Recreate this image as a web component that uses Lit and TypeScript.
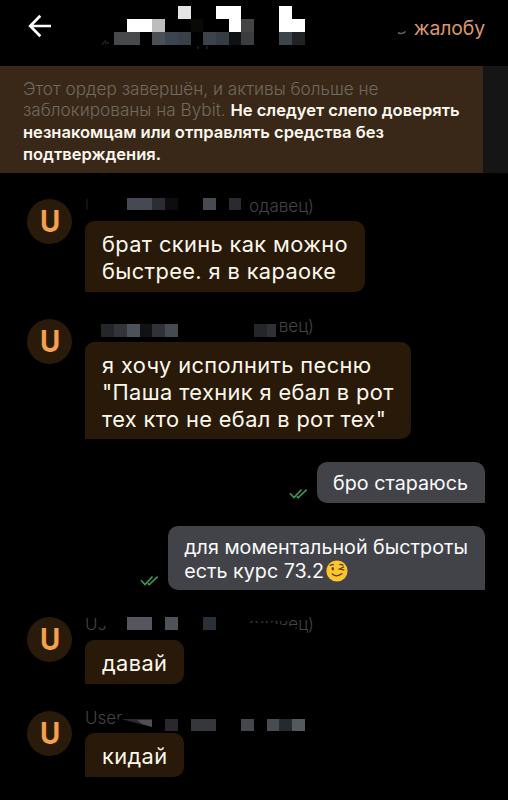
import { LitElement, html, css, svg } from "lit";
import { customElement, property } from "lit/decorators.js";

// x, y, width, height, colour
type Tile = [number, number, number, number, string];

const HEAD: Tile[] = [
  [178, 6, 13, 13, "#e4e4e4"], [216, 6, 25, 13, "#fff"], [229, 19, 12, 13, "#fff"],
  [241, 19, 13, 13, "#444"], [279, 6, 13, 13, "#fff"], [279, 19, 26, 13, "#fff"],
  [127, 19, 25, 13, "#fff"], [152, 19, 13, 13, "#bdbdbd"], [191, 19, 12, 13, "#090906"],
  [114, 32, 26, 13, "#47494d"], [152, 32, 13, 13, "#4b4f56"], [165, 32, 13, 13, "#3c4450"],
  [178, 32, 13, 13, "#3a4048"], [203, 32, 13, 13, "#3d434a"], [216, 32, 13, 13, "#353d42"],
  [229, 32, 12, 13, "#0e1213"], [241, 32, 13, 13, "#3b3d41"], [279, 32, 13, 13, "#3c454c"],
  [292, 32, 13, 13, "#202226"],
];
const N1: Tile[] = [
  [127, 198, 25, 12, "#464952"], [152, 198, 13, 12, "#2c2d32"], [165, 198, 13, 12, "#0d0d0e"],
  [203, 198, 13, 12, "#474b51"], [229, 198, 12, 12, "#2a2a31"],
];
const N2: Tile[] = [
  [101, 324, 13, 13, "#242629"], [114, 324, 13, 13, "#323438"], [127, 324, 13, 13, "#4b5259"],
  [140, 324, 12, 13, "#111214"], [152, 324, 13, 13, "#303237"], [165, 324, 13, 13, "#464a51"],
  [254, 324, 13, 13, "#25262a"], [267, 324, 9, 13, "#303136"],
];
const N3: Tile[] = [
  [127, 617, 25, 13, "#56565e"], [165, 617, 13, 13, "#4e5359"], [203, 617, 13, 13, "#2b3037"],
];
const N4: Tile[] = [
  [165, 719, 13, 12, "#29292d"], [191, 719, 25, 12, "#35373b"], [241, 719, 13, 12, "#45474c"],
  [267, 719, 12, 12, "#484b50"], [279, 719, 13, 12, "#252930"], [292, 719, 13, 12, "#55585d"],
];

const tiles = (list: Tile[], x: number, y: number) => svg`${list.map(
  ([tx, ty, w, h, c]) => svg`<rect x=${tx - x} y=${ty - y} width=${w} height=${h} fill=${c} />`
)}`;

@customElement("sender-avatar")
class SenderAvatar extends LitElement {
  static styles = css`
    :host { display: flex; width: 45px; height: 45px; flex: none; border-radius: 50%; background: #291a0a;
      align-items: center; justify-content: center; color: #f5a04b; }
    .letter { font: 700 30px/45px Inter, sans-serif; transform: scaleX(0.92); }
  `;
  render() { return html`<span class="letter">U</span>`; }
}

@customElement("chat-bubble")
class ChatBubble extends LitElement {
  @property({ type: Boolean, reflect: true }) own = false;
  static styles = css`
    :host { display: block; box-sizing: border-box; width: fit-content; white-space: nowrap;
      font: 400 21.8px/27px Inter, sans-serif; letter-spacing: 0.38px; color: #fdf8ec; background: #281909;
      padding: 10px 17px 7px 17px; border-radius: 9px 10px 10px 0; }
    :host([own]) { font-size: 19.7px; line-height: 24px; letter-spacing: 0.02px; color: #fafafa; background: #414349;
      padding: 9px 17px 7px 16px; border-radius: 10px 10px 0 10px; }
  `;
  render() { return html`<slot></slot>`; }
}

@customElement("app-root")
class AppRoot extends LitElement {
  static styles = css`
    :host { display: flex; flex-direction: column; width: 508px; height: 800px; overflow: hidden;
      background: #000; font-family: Inter, sans-serif; }
    svg { display: block; }
    .head { height: 66px; flex: none; display: flex; align-items: flex-start; justify-content: space-between;
      position: relative; }
    .back { margin: 14px 0 0 28px; }
    .mask { position: absolute; left: 0; top: 0; overflow: visible; }
    .appeal { margin: 16px 23px 0 0; font-size: 19.4px; line-height: 24px; letter-spacing: -0.1px; color: #d9976f; }
    .notice { height: 107px; flex: none; display: flex; background: #151515; }
    .text { box-sizing: border-box; width: 483px; padding: 12px 0 0 23px; background: #392818; white-space: nowrap;
      font-size: 17.2px; line-height: 21px; color: #71695f; }
    .dim { font-weight: 300; }
    .strong { color: #fdf8ef; font-weight: 600; font-size: 16.55px; }
    .chat { display: flex; flex-direction: column; }
    .in { display: flex; gap: 13px; padding-left: 27px; align-items: flex-start; }
    .r1 { margin-top: 26px; }
    .r2, .r5, .r6 { margin-top: 27px; }
    .body { display: flex; flex-direction: column; }
    .name { position: relative; height: 22px; width: 229px; font-size: 17px; line-height: 15px; color: #434346;
      font-weight: 300; display: flex; justify-content: space-between; }
    .r2 .name, .r5 .name { height: 23px; }
    .end { margin-left: auto; }
    .out { display: flex; justify-content: flex-end; align-items: flex-end; gap: 9px; padding-right: 23px; }
    .r3, .r4 { margin-top: 23px; }
    .tick { margin-bottom: 3px; }
    .emoji { display: inline-block; vertical-align: -4px; margin-left: 2px; }
    .three { padding-bottom: 6px; }
    .one { padding-bottom: 8px; }
  `;

  private tick() {
    return html`<svg class="tick" width="19" height="12" viewBox="0 0 19 12" fill="none" stroke="#3f9d55" stroke-width="1.5">
      <path d="M1 5.2 5 9.6 12.5 1.6M7.8 8.4 9.2 9.8 17.6 1.6" /></svg>`;
  }

  private mask(list: Tile[], x: number, y: number, extra: unknown = null) {
    return html`<svg class="mask" width="1" height="1">${extra}${tiles(list, x, y)}</svg>`;
  }

  render() {
    return html`
      <header class="head">
        <svg class="back" width="24" height="24" viewBox="0 0 24 24" fill="none" stroke="#fff" stroke-width="2.7">
          <path d="M23 12H3M12.3 1.8 2.2 12 12.3 22.2" /></svg>
        <span class="appeal">жалобу</span>
        ${this.mask(HEAD, 0, 0, svg`
          <path d="M398 32.5Q402 35 405.5 31.5" fill="none" stroke="#6b5a50" stroke-width="1.6" />
          <path d="M102 45 106 40M105 43H109M198 46V49M207 46V49" fill="none" stroke="#333" />`)}
      </header>
      <div class="notice"><div class="text">
        <span class="dim">Этот ордер завершён, и активы больше не<br />заблокированы на Bybit.</span>
        <span class="strong">Не следует слепо доверять<br />незнакомцам или отправлять средства без<br />подтверждения.</span>
      </div></div>
      <main class="chat">
        <div class="in r1"><sender-avatar></sender-avatar><div class="body">
          <div class="name"><span class="end">одавец)</span>${this.mask(N1, 85, 199, svg`<path d="M2 0V11" stroke="#222" />`)}</div>
          <chat-bubble>брат скинь как можно<br />быстрее. я в караоке</chat-bubble></div></div>
        <div class="in r2"><sender-avatar></sender-avatar><div class="body">
          <div class="name"><span class="end">вец)</span>${this.mask(N2, 85, 319)}</div>
          <chat-bubble class="three">я хочу исполнить песню<br />"Паша техник я ебал в рот<br />тех кто не ебал в рот тех"</chat-bubble></div></div>
        <div class="out r3">${this.tick()}<chat-bubble own class="one">бро стараюсь</chat-bubble></div>
        <div class="out r4">${this.tick()}<chat-bubble own>для моментальной быстроты<br />есть курс 73.2<svg class="emoji" width="22" height="22" viewBox="0 0 22 22">
          <circle cx="11" cy="11" r="10.6" fill="#fcc62e" />
          <ellipse cx="6.8" cy="8.8" rx="1.2" ry="1.7" fill="#5a3b12" />
          <path d="M4.2 5.4Q5.8 4.2 7.4 4.8M13.8 4.6Q15.4 4 17 5.2M17.6 7 13.6 9 17.8 9.8M6.2 14Q10.8 18 16 13.6" fill="none" stroke="#5a3b12" stroke-width="1.3" stroke-linecap="round" />
        </svg></chat-bubble></div>
        <div class="in r5"><sender-avatar></sender-avatar><div class="body">
          <div class="name"><span>Us</span><span class="end">одавец)</span>${this.mask(N3, 85, 617, svg`
            <path d="M12 0H40V9H12ZM0 0H12V1H0ZM160 6 178 6 194 7 205 9 212 12V18H160ZM160 0H200L207 4H160Z" fill="#000" />`)}</div>
          <chat-bubble>давай</chat-bubble></div></div>
        <div class="in r6"><sender-avatar></sender-avatar><div class="body">
          <div class="name"><span>User</span>${this.mask(N4, 85, 711, svg`
            <path d="M31 9 40 7 45 16H31Z" fill="#000" />
            <path d="M36 8H67V16L55 13Z" fill="#2b2b2e" /><path d="M52 9H67V16L57 13Z" fill="#505054" />`)}</div>
          <chat-bubble>кидай</chat-bubble></div></div>
      </main>`;
  }
}
